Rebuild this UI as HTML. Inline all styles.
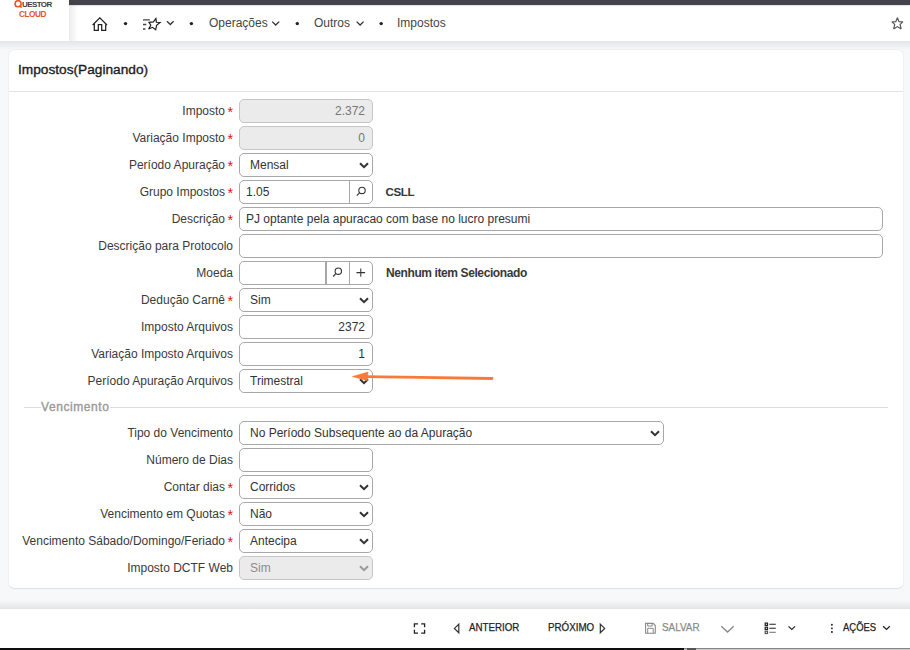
<!DOCTYPE html>
<html><head><meta charset="utf-8">
<style>
*{box-sizing:border-box;margin:0;padding:0}
html,body{width:910px;height:650px;overflow:hidden;background:#f7f8fa;font-family:"Liberation Sans",sans-serif;color:#333;position:relative}
.abs{position:absolute}
#topbar{position:absolute;left:69px;top:0;width:841px;height:4.5px;background:#44434a;box-shadow:0 1px 1.5px rgba(0,0,0,0.12);z-index:2}
#header{position:absolute;left:0;top:5px;width:910px;height:36px;background:#fff}
#logo{position:absolute;left:0;top:0;width:69px;height:41px;background:#fff;z-index:3}
#hshadow{position:absolute;left:0;top:41px;width:910px;height:9px;background:linear-gradient(#e4e5e7,#f7f8fa)}
#lshadow{position:absolute;left:69px;top:5px;width:9px;height:36px;background:linear-gradient(90deg,#ececec,#fff)}
.crumb{position:absolute;top:16px;font-size:12px;color:#444;line-height:14px;white-space:nowrap}
.dot{position:absolute;top:22px;width:4px;height:4px;border-radius:50%;background:#222}
#card{position:absolute;left:9px;top:50px;width:894px;height:538px;background:#fff;border-radius:5px;box-shadow:0 0.5px 1px rgba(0,0,0,0.08),0 0 0 0.5px rgba(0,0,0,0.04)}
#title{position:absolute;left:18px;top:62px;font-size:13.7px;color:#1b1b24;line-height:16px;white-space:nowrap;-webkit-text-stroke:0.35px #1b1b24}
#sep{position:absolute;left:9px;top:91px;width:894px;height:1px;background:#e3e3e3}
.lab{position:absolute;left:0;width:233px;text-align:right;font-size:12px;line-height:24px;height:24px;color:#3a3a3a;white-space:nowrap}
.lab.r{width:234px}
.req{color:#e8101a;margin-left:3px;font-size:14.5px;display:inline-block;width:6px;text-align:left;vertical-align:top;position:relative;top:0.5px;left:-0.5px}
.inp{position:absolute;left:239px;width:134px;height:24px;border:1px solid #a8a8a8;border-radius:5px;background:#fff;font-size:12px;line-height:22px;color:#333}
.inp.dis{background:#ebebeb;border-color:#c6c6c6}
.vr{position:absolute;right:7px;top:0;color:#777}
.vr.dk{color:#333}
.vs{position:absolute;left:10px;top:0}
.vs.gr{color:#8c8c8c}
.vl{position:absolute;left:6px;top:0}
.chev{position:absolute;right:3px;top:8px}
.btn{position:absolute;top:-1px;height:24px;border-left:1px solid #a8a8a8;display:flex;align-items:center;justify-content:center}
.btn2{position:absolute;top:-1px;height:24px;border-left:2px solid #a8a8a8;display:flex;align-items:center;justify-content:center}
.desc{position:absolute;font-size:12px;font-weight:bold;line-height:24px;color:#383838;white-space:nowrap}
#legline{position:absolute;left:24px;top:407px;width:864px;height:1px;background:#dcdcdc}
#legend{position:absolute;left:41px;top:399px;padding:0;background:#fff;font-size:12px;line-height:16px;color:#999;letter-spacing:0.58px;-webkit-text-stroke:0.35px #999}
#fshadow{position:absolute;left:0;top:600px;width:910px;height:9px;background:linear-gradient(#f7f8fa,#e4e5e7)}
#footer{position:absolute;left:0;top:609px;width:910px;height:39px;background:#fff}
#fline{position:absolute;left:0;top:648px;width:684px;height:2px;background:#0e0e0e}
#fline2{position:absolute;left:685px;top:648px;width:225px;height:2px;background:#8a8a8a}
.ft{position:absolute;top:620px;font-size:11px;line-height:14px;color:#222;white-space:nowrap;transform-origin:0 0;-webkit-text-stroke:0.25px currentColor}
#arrow{position:absolute;left:0;top:0}
</style></head><body>
<div id="topbar"></div>
<div id="header"></div>
<div id="lshadow"></div>
<div id="logo">
  <svg class="abs" style="left:10px;top:0px" width="16" height="12" viewBox="10 0 16 12"><circle cx="18.1" cy="3.7" r="3.05" fill="none" stroke="#e8552a" stroke-width="1.6"/><path d="M19.6 5.6 L21.6 7.6" stroke="#e8552a" stroke-width="1.5"/></svg>
  <div class="abs" style="left:22px;top:0.95px;font-size:8px;line-height:8px;font-weight:bold;color:#3d3d48;letter-spacing:-0.6px;white-space:nowrap">UESTOR</div>
  <div class="abs" style="left:18.9px;top:9.5px;font-size:8.3px;line-height:8.3px;font-weight:bold;color:#e8552a;letter-spacing:-0.45px;white-space:nowrap">CLOUD</div>
</div>
<div id="hshadow"></div>

<!-- breadcrumb -->
<svg class="abs" style="left:88px;top:12px" width="24" height="24" viewBox="88 12 24 24"><path d="M92.6 25 L99.8 17.9 L107 25 M94.3 23.3 V30.3 H98.3 V24.6 H101.7 V30.3 H105.7 V23.3" fill="none" stroke="#222" stroke-width="1.25" stroke-linejoin="miter"/></svg>
<svg class="abs" style="left:120px;top:18px" width="12" height="12" viewBox="120 18 12 12"><circle cx="125.5" cy="23.6" r="1.7" fill="#222"/></svg>
<svg class="abs" style="left:138px;top:12px" width="42" height="24" viewBox="138 12 42 24"><path d="M143 19.9 H149.8 M143 24.5 H146.3 M143 29 H145.4" stroke="#444" stroke-width="1.4"/><path d="M149 22.4 L153.4 21.9 L155.9 18.4 L156.4 22.2 L160.1 22.4 L156.6 25.2 L155.7 29.7 L152.5 27.3 L148.6 29.1 L150.8 25.3 Z" fill="none" stroke="#1a1a1a" stroke-width="1.15" stroke-linejoin="miter" stroke-miterlimit="3"/><path d="M167 21.3 L170.3 24.5 L173.6 21.3" fill="none" stroke="#333" stroke-width="1.3"/></svg>
<svg class="abs" style="left:186px;top:18px" width="12" height="12" viewBox="186 18 12 12"><circle cx="191.4" cy="23.6" r="1.7" fill="#222"/></svg>
<div class="crumb" style="left:209px">Operações</div>
<svg class="abs" style="left:268px;top:18px" width="14" height="10" viewBox="268 18 14 10"><path d="M272.2 21.6 L275.7 25 L279.2 21.6" fill="none" stroke="#333" stroke-width="1.3"/></svg>
<svg class="abs" style="left:292px;top:18px" width="12" height="12" viewBox="292 18 12 12"><circle cx="297.3" cy="23.6" r="1.7" fill="#222"/></svg>
<div class="crumb" style="left:314px">Outros</div>
<svg class="abs" style="left:352px;top:18px" width="14" height="10" viewBox="352 18 14 10"><path d="M356.6 21.6 L360.1 25 L363.6 21.6" fill="none" stroke="#333" stroke-width="1.3"/></svg>
<svg class="abs" style="left:376px;top:18px" width="12" height="12" viewBox="376 18 12 12"><circle cx="381.2" cy="23.6" r="1.7" fill="#222"/></svg>
<div class="crumb" style="left:397px">Impostos</div>
<svg class="abs" style="left:886px;top:12px" width="22" height="22" viewBox="886 12 22 22"><path d="M897.4 17.6 L899 21.6 L902.9 21.9 L900.1 24.4 L901.1 28.9 L897.4 26.6 L893.7 28.9 L894.7 24.4 L891.9 21.9 L895.8 21.6 Z" fill="none" stroke="#555" stroke-width="1.2" stroke-linejoin="miter" stroke-miterlimit="2.5"/></svg>

<div id="card"></div>
<div id="title">Impostos(Paginando)</div>
<div id="sep"></div>
<div class="lab r" style="top:99px">Imposto<span class="req">*</span></div>
<div class="inp dis" style="top:99px;"><span class="vr">2.372</span></div>
<div class="lab r" style="top:126px">Variação Imposto<span class="req">*</span></div>
<div class="inp dis" style="top:126px;"><span class="vr">0</span></div>
<div class="lab r" style="top:153px">Período Apuração<span class="req">*</span></div>
<div class="inp" style="top:153px;"><span class="vs">Mensal</span><svg class="chev" width="10" height="7" viewBox="0 0 10 7"><path d="M1 1.2 L5 5.2 L9 1.2" fill="none" stroke="#333" stroke-width="2"/></svg></div>
<div class="lab r" style="top:180px">Grupo Impostos<span class="req">*</span></div>
<div class="inp" style="top:180px;"><span class="vl">1.05</span><div class="btn" style="left:109px;width:24px"></div></div>
<svg class="abs" style="left:354px;top:182px" width="16" height="16" viewBox="354 182 16 16"><circle cx="362.0" cy="190.4" r="3.2" fill="none" stroke="#333" stroke-width="1.1"/><path d="M359.50 192.90 L356.80 195.70" stroke="#333" stroke-width="1.15"/></svg>
<div class="desc" style="top:180px;left:385.6px;font-size:11.6px;letter-spacing:-0.45px">CSLL</div>
<div class="lab r" style="top:207px">Descrição<span class="req">*</span></div>
<div class="inp" style="top:207px;width:644px"><span class="vl">PJ optante pela apuracao com base no lucro presumi</span></div>
<div class="lab" style="top:234px">Descrição para Protocolo</div>
<div class="inp" style="top:234px;width:644px"><span class="vl"></span></div>
<div class="lab" style="top:261px">Moeda</div>
<div class="inp" style="top:261px;"><div class="btn2" style="left:85px;width:23px"></div><div class="btn" style="left:109px;width:24px"></div></div>
<svg class="abs" style="left:330px;top:263px" width="16" height="16" viewBox="330 263 16 16"><circle cx="338.3" cy="271.2" r="3.2" fill="none" stroke="#333" stroke-width="1.1"/><path d="M335.80 273.70 L333.10 276.50" stroke="#333" stroke-width="1.15"/></svg>
<svg class="abs" style="left:352px;top:264px" width="16" height="16" viewBox="352 264 16 16"><path d="M360.8 268.40 V276.80 M356.50 272.6 H365.10" stroke="#333" stroke-width="1.05"/></svg>
<div class="desc" style="top:261px;left:386px;letter-spacing:-0.4px">Nenhum item Selecionado</div>
<div class="lab r" style="top:288px">Dedução Carnê<span class="req">*</span></div>
<div class="inp" style="top:288px;"><span class="vs">Sim</span><svg class="chev" width="10" height="7" viewBox="0 0 10 7"><path d="M1 1.2 L5 5.2 L9 1.2" fill="none" stroke="#333" stroke-width="2"/></svg></div>
<div class="lab" style="top:315px">Imposto Arquivos</div>
<div class="inp" style="top:315px;"><span class="vr dk">2372</span></div>
<div class="lab" style="top:342px">Variação Imposto Arquivos</div>
<div class="inp" style="top:342px;"><span class="vr dk">1</span></div>
<div class="lab" style="top:369px">Período Apuração Arquivos</div>
<div class="inp" style="top:369px;"><span class="vs">Trimestral</span><svg class="chev" width="10" height="7" viewBox="0 0 10 7"><path d="M1 1.2 L5 5.2 L9 1.2" fill="none" stroke="#333" stroke-width="2"/></svg></div>
<div id="legline"></div>
<div id="legend">Vencimento</div>
<div class="lab" style="top:421px">Tipo do Vencimento</div>
<div class="inp" style="top:421px;width:425px"><span class="vs">No Período Subsequente ao da Apuração</span><svg class="chev" width="10" height="7" viewBox="0 0 10 7"><path d="M1 1.2 L5 5.2 L9 1.2" fill="none" stroke="#333" stroke-width="2"/></svg></div>
<div class="lab" style="top:448px">Número de Dias</div>
<div class="inp" style="top:448px;"><span class="vr dk"></span></div>
<div class="lab r" style="top:475px">Contar dias<span class="req">*</span></div>
<div class="inp" style="top:475px;"><span class="vs">Corridos</span><svg class="chev" width="10" height="7" viewBox="0 0 10 7"><path d="M1 1.2 L5 5.2 L9 1.2" fill="none" stroke="#333" stroke-width="2"/></svg></div>
<div class="lab r" style="top:502px">Vencimento em Quotas<span class="req">*</span></div>
<div class="inp" style="top:502px;"><span class="vs">Não</span><svg class="chev" width="10" height="7" viewBox="0 0 10 7"><path d="M1 1.2 L5 5.2 L9 1.2" fill="none" stroke="#333" stroke-width="2"/></svg></div>
<div class="lab r" style="top:529px">Vencimento Sábado/Domingo/Feriado<span class="req">*</span></div>
<div class="inp" style="top:529px;"><span class="vs">Antecipa</span><svg class="chev" width="10" height="7" viewBox="0 0 10 7"><path d="M1 1.2 L5 5.2 L9 1.2" fill="none" stroke="#333" stroke-width="2"/></svg></div>
<div class="lab" style="top:556px">Imposto DCTF Web</div>
<div class="inp dis" style="top:556px;"><span class="vs gr">Sim</span><svg class="chev" width="10" height="7" viewBox="0 0 10 7"><path d="M1 1.2 L5 5.2 L9 1.2" fill="none" stroke="#999" stroke-width="2"/></svg></div>

<!-- orange arrow -->
<svg class="abs" style="left:345px;top:365px" width="155" height="25" viewBox="345 365 155 25"><path d="M364 376.6 L420 377.3 L492 378.5" fill="none" stroke="#f97a38" stroke-width="2.8" stroke-linecap="round"/><path d="M352.4 376.5 L368 372 L367.3 380.8 Z" fill="#f97a38" stroke="#f97a38" stroke-width="0.5" stroke-linejoin="round"/></svg>

<div id="fshadow"></div>
<div id="footer"></div>
<div id="fline"></div>
<div class="abs" style="left:684px;top:648px;width:226px;height:1px;background:#858585"></div><div class="abs" style="left:684px;top:649px;width:226px;height:1px;background:#cdcdcd"></div><div class="abs" style="left:687px;top:648px;width:9px;height:2px;background:#555"></div>
<!-- footer items -->
<svg class="abs" style="left:410px;top:618px" width="20" height="20" viewBox="410 618 20 20"><path d="M414.4 627.3 V623.8 H418 M421.2 623.8 H424.6 V627.3 M424.6 629.8 V633.1 H421.2 M418 633.1 H414.4 V629.8" fill="none" stroke="#222" stroke-width="1.3"/></svg>
<svg class="abs" style="left:450px;top:618px" width="14" height="20" viewBox="450 618 14 20"><path d="M458.8 624.2 L454.4 628.4 L458.8 632.7 Z" fill="none" stroke="#333" stroke-width="1.2" stroke-linejoin="miter"/></svg>
<div class="ft" style="left:469px;transform:scaleX(0.885)">ANTERIOR</div>
<div class="ft" style="left:548px;transform:scaleX(0.89)">PRÓXIMO</div>
<svg class="abs" style="left:596px;top:618px" width="14" height="20" viewBox="596 618 14 20"><path d="M600.3 624.2 L604.7 628.4 L600.3 632.7 Z" fill="none" stroke="#333" stroke-width="1.2" stroke-linejoin="miter"/></svg>
<svg class="abs" style="left:642px;top:618px" width="16" height="18" viewBox="642 618 16 18"><path d="M645.6 623.4 H653.2 L655.3 625.5 V633.3 H645.6 Z" fill="none" stroke="#8a8a8a" stroke-width="1.1"/><path d="M647.7 623.4 V626 H652.1 V623.4 M647.7 633.3 V628.3 H653.2 V633.3" fill="none" stroke="#8a8a8a" stroke-width="1"/></svg>
<div class="ft" style="left:662px;color:#8a8a8a;transform:scaleX(0.9)">SALVAR</div>
<svg class="abs" style="left:718px;top:622px" width="20" height="14" viewBox="718 622 20 14"><path d="M721.3 626.3 L727.5 632 L733.7 626.3" fill="none" stroke="#888" stroke-width="1.3"/></svg>
<svg class="abs" style="left:760px;top:618px" width="20" height="20" viewBox="760 618 20 20"><rect x="765.2" y="623.1" width="2.3" height="2.3" fill="none" stroke="#222" stroke-width="1.2"/><rect x="765.2" y="627.2" width="2.3" height="2.3" fill="none" stroke="#222" stroke-width="1.2"/><rect x="765.2" y="631.2" width="2.3" height="2.3" fill="none" stroke="#555" stroke-width="1.2"/><path d="M769.3 624.3 H775.8 M769.3 628.3 H775.8" stroke="#222" stroke-width="1.1"/><path d="M769.3 632.3 H775.8" stroke="#777" stroke-width="1.1"/></svg>
<svg class="abs" style="left:784px;top:620px" width="14" height="14" viewBox="784 620 14 14"><path d="M788.5 626.4 L791.8 629.5 L795.1 626.4" fill="none" stroke="#222" stroke-width="1.15"/></svg>
<svg class="abs" style="left:826px;top:618px" width="12" height="20" viewBox="826 618 12 20"><circle cx="831.9" cy="624.7" r="0.95" fill="#222"/><circle cx="831.9" cy="628.35" r="0.95" fill="#222"/><circle cx="831.9" cy="632" r="0.95" fill="#222"/></svg>
<div class="ft" style="left:843px;transform:scaleX(0.86)">AÇÕES</div>
<svg class="abs" style="left:878px;top:620px" width="16" height="14" viewBox="878 620 16 14"><path d="M883.1 626.3 L886.5 629.4 L889.8 626.3" fill="none" stroke="#222" stroke-width="1.3"/></svg>
</body></html>
